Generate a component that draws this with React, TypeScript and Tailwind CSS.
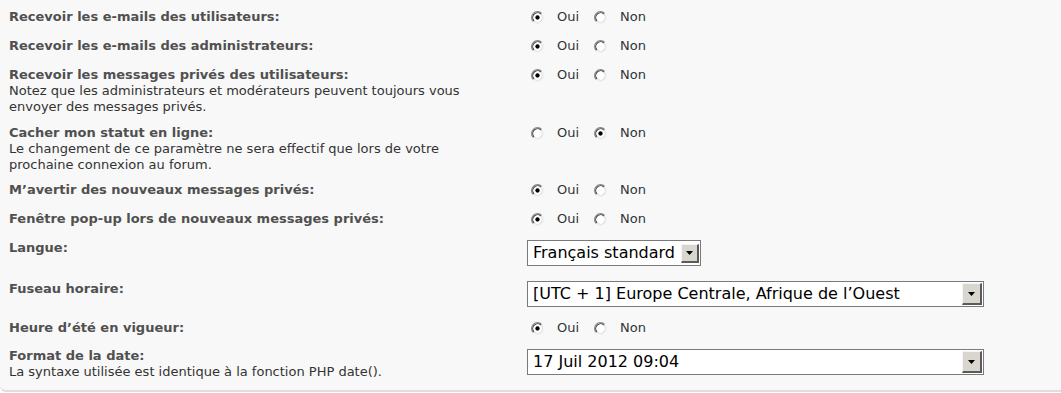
import React from 'react';

type RowProps = {
  label: string;
  explain?: string[];
  h?: string;
  children: React.ReactNode;
};

function Radio({ checked }: { checked: boolean }) {
  return (
    <svg width="13" height="13" viewBox="0 0 12 12" className="shrink-0">
      <circle cx="6" cy="6" r="5" fill="#ffffff" />
      <path d="M9.89 2.11 A5.5 5.5 0 0 0 2.11 9.89" fill="none" stroke="#8a8a8a" strokeWidth="1" />
      <path d="M2.11 9.89 A5.5 5.5 0 0 0 9.89 2.11" fill="none" stroke="#f2f2f2" strokeWidth="1" />
      <path d="M9.18 2.82 A4.5 4.5 0 0 0 2.82 9.18" fill="none" stroke="#3a3a3a" strokeWidth="1" />
      <path d="M2.82 9.18 A4.5 4.5 0 0 0 9.18 2.82" fill="none" stroke="#dcdcdc" strokeWidth="1" />
      {checked && <circle cx="6" cy="6" r="2" fill="#000000" />}
    </svg>
  );
}

function YesNo({ yes }: { yes: boolean }) {
  return (
    <div className="flex h-4 items-center pl-[4px] pt-[5px] box-content text-[13px] text-[#333333]">
      <Radio checked={yes} />
      <span className="ml-[13px] w-[37px]">Oui</span>
      <Radio checked={!yes} />
      <span className="ml-[13px]">Non</span>
    </div>
  );
}

function Select({ value, width, big }: { value: string; width: string; big?: boolean }) {
  return (
    <div className={`flex items-center border border-[#7a7a7a] bg-white ${width}`}>
      <span className="flex-1 pl-[5px] text-[16px] leading-[24px] text-black whitespace-nowrap">{value}</span>
      <span
        className={`mr-[1px] flex items-center justify-center border-t border-l border-t-[#f4f4f4] border-l-[#f4f4f4] border-r-2 border-b-2 border-r-[#5a5a5a] border-b-[#5a5a5a] bg-[#d8d6cf] ${
          big ? 'h-[22px] w-[20px]' : 'h-[19px] w-[18px]'
        }`}
      >
        <svg width="7" height="4" viewBox="0 0 7 4">
          <path d="M0 0 H7 L3.5 4 Z" fill="#000000" />
        </svg>
      </span>
    </div>
  );
}

function Row({ label, explain, h, children }: RowProps) {
  return (
    <div className={`flex ${h ?? ''}`}>
      <div className="w-[527px] shrink-0 pl-[9px] pt-[5px] pb-[5px] leading-4">
        <div className="font-bold text-[13px] text-[#505050]">{label}</div>
        {explain?.map((line) => (
          <div key={line} className="text-[13px] text-[#333333]">{line}</div>
        ))}
      </div>
      <div className="flex-1">{children}</div>
    </div>
  );
}

export default function App() {
  return (
    <div className="h-[393px] w-[1061px] bg-white" style={{ fontFamily: '"DejaVu Sans", Verdana, sans-serif' }}>
      <div className="h-[392px] rounded-bl-[6px] border-b-2 border-[#dedede] bg-[#f8f8f8] pt-[4px]">
        <Row label="Recevoir les e-mails des utilisateurs:" h="h-[29px]">
          <YesNo yes />
        </Row>
        <Row label="Recevoir les e-mails des administrateurs:" h="h-[29px]">
          <YesNo yes />
        </Row>
        <Row
          label="Recevoir les messages privés des utilisateurs:"
          explain={['Notez que les administrateurs et modérateurs peuvent toujours vous', 'envoyer des messages privés.']}
          h="h-[58px]"
        >
          <YesNo yes />
        </Row>
        <Row
          label="Cacher mon statut en ligne:"
          explain={['Le changement de ce paramètre ne sera effectif que lors de votre', 'prochaine connexion au forum.']}
          h="h-[57px]"
        >
          <YesNo yes={false} />
        </Row>
        <Row label="M’avertir des nouveaux messages privés:" h="h-[29px]">
          <YesNo yes />
        </Row>
        <Row label="Fenêtre pop-up lors de nouveaux messages privés:" h="h-[29px]">
          <YesNo yes />
        </Row>
        <Row label="Langue:" h="h-[41px]">
          <div className="pt-[5px]">
            <Select value="Français standard" width="w-[174px]" />
          </div>
        </Row>
        <Row label="Fuseau horaire:" h="h-[39px]">
          <div className="pt-[5px]">
            <Select value="[UTC + 1] Europe Centrale, Afrique de l’Ouest" width="w-[457px]" big />
          </div>
        </Row>
        <Row label="Heure d’été en vigueur:" h="h-[28px]">
          <YesNo yes />
        </Row>
        <Row label="Format de la date:" explain={['La syntaxe utilisée est identique à la fonction PHP date().']}>
          <div className="pt-[6px]">
            <Select value="17 Juil 2012 09:04" width="w-[457px]" big />
          </div>
        </Row>
      </div>
    </div>
  );
}
